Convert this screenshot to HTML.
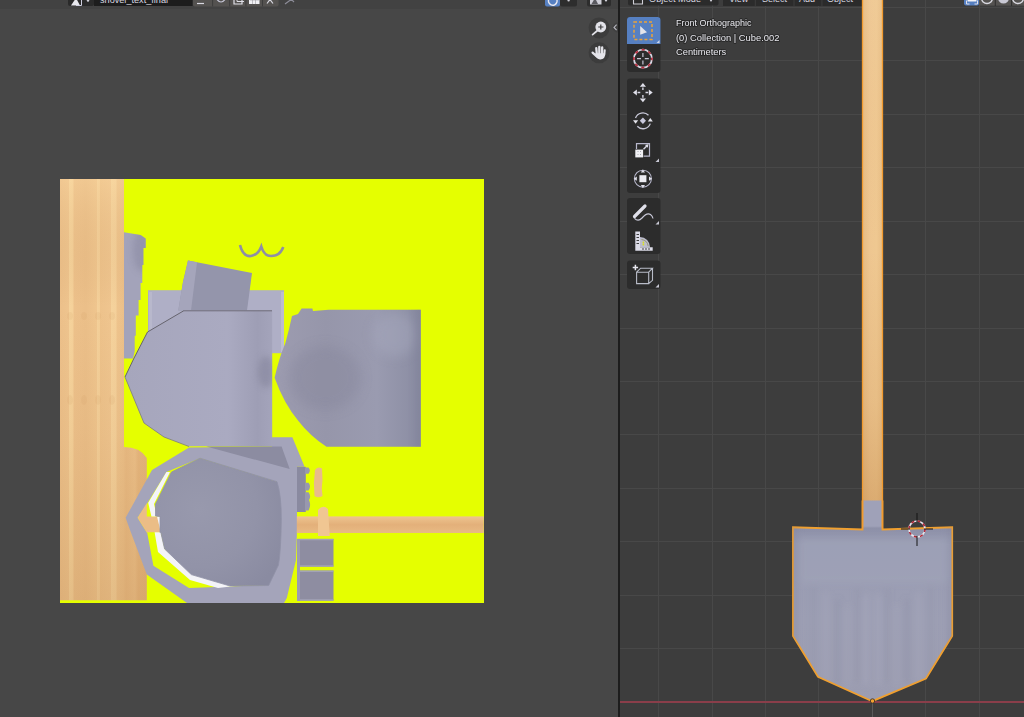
<!DOCTYPE html>
<html><head><meta charset="utf-8"><style>
html,body{margin:0;padding:0;width:1024px;height:717px;overflow:hidden;background:#474747}
svg{display:block}
text{font-family:"Liberation Sans",sans-serif}
</style></head><body>
<svg width="1024" height="717" viewBox="0 0 1024 717">
<defs>
<filter id="bl6" x="-50%" y="-50%" width="200%" height="200%"><feGaussianBlur stdDeviation="6"/></filter>
<filter id="bl3" x="-50%" y="-50%" width="200%" height="200%"><feGaussianBlur stdDeviation="3"/></filter>
<clipPath id="rpClip"><path d="M328.6 309.7H420.8V446.8H326.5Q310 436 298.4 421Q284 404 274.6 377.8Q279 358 285.4 343Q289 330 292 316L298 314L301.6 308.6H312.4L313 311Z"/></clipPath>
<clipPath id="fpClip"><path d="M184 310.6H272.2V446.3H189L164 437L144 423L125 377L133.6 359L147.5 332Z"/></clipPath>
<linearGradient id="woodV" x1="60" x2="147" y1="0" y2="0" gradientUnits="userSpaceOnUse">
<stop offset="0" stop-color="#ecc08a"/>
<stop offset="0.10" stop-color="#eec48e"/>
<stop offset="0.11" stop-color="#f6d39c"/>
<stop offset="0.15" stop-color="#f5d19a"/>
<stop offset="0.16" stop-color="#edc18b"/>
<stop offset="0.30" stop-color="#ebbf89"/>
<stop offset="0.42" stop-color="#efc58e"/>
<stop offset="0.43" stop-color="#f4d09a"/>
<stop offset="0.455" stop-color="#f3ce97"/>
<stop offset="0.465" stop-color="#edc28b"/>
<stop offset="0.58" stop-color="#efc58f"/>
<stop offset="0.59" stop-color="#f5d29c"/>
<stop offset="0.645" stop-color="#f4d09a"/>
<stop offset="0.655" stop-color="#eec48d"/>
<stop offset="0.73" stop-color="#ecc089"/>
<stop offset="0.76" stop-color="#e9bb84"/>
<stop offset="0.86" stop-color="#edc18a"/>
<stop offset="0.9" stop-color="#e7b880"/>
<stop offset="1" stop-color="#e6b57d"/>
</linearGradient>
<linearGradient id="woodShade" x1="0" x2="0" y1="179" y2="603" gradientUnits="userSpaceOnUse">
<stop offset="0" stop-color="#ffe0a8" stop-opacity="0.25"/>
<stop offset="0.3" stop-color="#a06a30" stop-opacity="0"/>
<stop offset="0.6" stop-color="#a06a30" stop-opacity="0.06"/>
<stop offset="1" stop-color="#a06a30" stop-opacity="0.2"/>
</linearGradient>
<linearGradient id="handleShade" x1="0" x2="0" y1="0" y2="501" gradientUnits="userSpaceOnUse">
<stop offset="0" stop-color="#ffffff" stop-opacity="0.05"/>
<stop offset="0.5" stop-color="#b07030" stop-opacity="0.0"/>
<stop offset="0.8" stop-color="#b07030" stop-opacity="0.12"/>
<stop offset="1" stop-color="#a86420" stop-opacity="0.28"/>
</linearGradient>
<linearGradient id="woodH" x1="0" x2="0" y1="0" y2="1">
<stop offset="0" stop-color="#eec48f"/>
<stop offset="0.5" stop-color="#e3b07a"/>
<stop offset="1" stop-color="#e8ba84"/>
</linearGradient>
<linearGradient id="handleV" x1="0" x2="1" y1="0" y2="0">
<stop offset="0" stop-color="#e6bb82"/>
<stop offset="0.35" stop-color="#eec690"/>
<stop offset="0.7" stop-color="#efc891"/>
<stop offset="1" stop-color="#e8be86"/>
</linearGradient>
<linearGradient id="blade" x1="0" x2="0" y1="500" y2="701" gradientUnits="userSpaceOnUse">
<stop offset="0" stop-color="#9fa1b8"/>
<stop offset="0.13" stop-color="#9fa1b8"/>
<stop offset="0.14" stop-color="#8d90a8"/>
<stop offset="0.22" stop-color="#999cb3"/>
<stop offset="0.6" stop-color="#9d9fb4"/>
<stop offset="1" stop-color="#9c9db1"/>
</linearGradient>
<linearGradient id="bladeEdge" x1="0" x2="1" y1="0" y2="0">
<stop offset="0" stop-color="#6f7188" stop-opacity="0.55"/>
<stop offset="0.2" stop-color="#6f7188" stop-opacity="0"/>
<stop offset="0.8" stop-color="#6f7188" stop-opacity="0"/>
<stop offset="1" stop-color="#6f7188" stop-opacity="0.5"/>
</linearGradient>
<linearGradient id="rightPiece" x1="0" x2="1" y1="0" y2="0">
<stop offset="0" stop-color="#9d9cb0"/>
<stop offset="0.35" stop-color="#9696aa"/>
<stop offset="0.7" stop-color="#9a9bb0"/>
<stop offset="1" stop-color="#8a8ca2"/>
</linearGradient>
<linearGradient id="frontPiece" x1="0" x2="1" y1="0" y2="0">
<stop offset="0" stop-color="#a6a6bc"/>
<stop offset="0.7" stop-color="#aaaac1"/>
<stop offset="0.9" stop-color="#9e9eb5"/>
<stop offset="1" stop-color="#a4a4bb"/>
</linearGradient>
<radialGradient id="innerOct" cx="0.35" cy="0.4" r="0.75">
<stop offset="0" stop-color="#9899ad"/>
<stop offset="0.6" stop-color="#9293a8"/>
<stop offset="1" stop-color="#8a8ba1"/>
</radialGradient>
</defs>

<!-- ============ LEFT EDITOR ============ -->
<rect x="0" y="0" width="618" height="717" fill="#474747"/>
<rect x="0" y="0" width="618" height="9" fill="#424242"/>

<!-- left header items (cut off at top) -->
<rect x="68" y="-6" width="26" height="12" rx="2" fill="#2a2a2a"/>
<path d="M71 5.5L76 -2L80 5.5Z" fill="#e8e8ee"/>
<path d="M81.5 -2V5.5H76" fill="none" stroke="#cfcfe0" stroke-width="1"/>
<circle cx="88" cy="0.5" r="1.2" fill="#d0d0d8"/>
<rect x="94" y="-6" width="98.6" height="12" fill="#1d1d1d"/>
<text x="100" y="2.6" font-size="9" fill="#d8d8e0" textLength="68" lengthAdjust="spacingAndGlyphs">shovel_text_final</text>
<rect x="193" y="-6" width="85.6" height="12.4" rx="2" fill="#545250"/>
<path d="M212.6 -6V6.4M229.7 -6V6.4M245.9 -6V6.4M262.5 -6V6.4" stroke="#3c3c3c" stroke-width="1"/>
<path d="M197 3.5H204" stroke="#d8d8e0" stroke-width="1.2"/>
<path d="M216 -2Q221 6 226 -2" fill="none" stroke="#c8c8d8" stroke-width="1.2"/>
<path d="M234 -2V4H242V-2" fill="none" stroke="#e0e0e8" stroke-width="1.2"/>
<path d="M237 -2V1.5H244" fill="none" stroke="#e0e0e8" stroke-width="1"/>
<rect x="249" y="-3" width="10.5" height="7" fill="#f0f0f4"/>
<path d="M250 0H259M252.5 -3V4M255.5 -3V4" stroke="#9a9aa0" stroke-width="0.6"/>
<path d="M267 3.5L270 -0.5L273 3.5" fill="none" stroke="#d8d8e0" stroke-width="1.2"/>
<path d="M285 4L294.5 -3M290 -2L294 2" fill="none" stroke="#8c8c98" stroke-width="1.2"/>

<!-- left header right side -->
<rect x="545" y="-6" width="15" height="12.6" rx="2" fill="#5680c2"/>
<path d="M556.3 -1.5A4.3 4.3 0 1 1 552 -3.3" fill="none" stroke="#e8e8f0" stroke-width="1.4"/>
<circle cx="555.5" cy="-2.5" r="1.8" fill="#e8e8f0"/>
<rect x="560" y="-6" width="17" height="12.6" rx="2" fill="#2d2d2d"/>
<circle cx="568.6" cy="0.3" r="1.2" fill="#d0d0d8"/>
<rect x="587" y="-6" width="24" height="12.6" rx="2" fill="#2d2d2d"/>
<rect x="590" y="-4" width="11.5" height="8.5" fill="#cfcfd8"/>
<path d="M591.5 4L595 -2L598 4Z" fill="#5a5a60"/>
<circle cx="606" cy="0.3" r="1.2" fill="#d0d0d8"/>

<!-- nav gizmo -->
<circle cx="599.1" cy="27.9" r="10.5" fill="#3c3c3c"/>
<circle cx="600.8" cy="27" r="5.4" fill="#e2e2e8"/>
<path d="M598.2 27H603.4M600.8 24.4V29.6" stroke="#3c3c3c" stroke-width="1.2"/>
<path d="M597.2 30.8L592.6 34.6" stroke="#e2e2e8" stroke-width="1.8" stroke-linecap="round"/>
<circle cx="599.1" cy="52.8" r="10.5" fill="#3c3c3c"/>
<g stroke="#e4e4ea" stroke-linecap="round" fill="none">
<path d="M596.3 48.2L596.8 54" stroke-width="2.3"/>
<path d="M599.3 46.9V54" stroke-width="2.3"/>
<path d="M602.2 47.4L602 54" stroke-width="2.3"/>
<path d="M604.7 50.4L604.2 55" stroke-width="2.1"/>
<path d="M592.6 52.6L596.5 56.2" stroke-width="2.3"/>
</g>
<path d="M595.2 53.2H605.2Q605.3 59.6 600 59.4Q596.5 59.3 595.2 55Z" fill="#e4e4ea"/>
<circle cx="617.5" cy="27.4" r="5" fill="#404040"/>
<path d="M616.6 24.6L614 27.4L616.6 30.2" fill="none" stroke="#b8b8c0" stroke-width="1.1"/>

<!-- ============ UV IMAGE ============ -->
<rect x="60" y="179" width="424" height="424" fill="#e5ff00"/>
<path d="M60 179H124V447Q140 447 146.8 458V600.2H60Z" fill="url(#woodV)"/>
<path d="M60 179H124V447Q140 447 146.8 458V600.2H60Z" fill="url(#woodShade)"/>
<g fill="#c89058" opacity="0.1">
<ellipse cx="70" cy="316" rx="3" ry="4"/><ellipse cx="84" cy="316" rx="3" ry="4"/><ellipse cx="98" cy="316" rx="3" ry="4"/><ellipse cx="112" cy="316" rx="3" ry="4"/>
<ellipse cx="70" cy="400" rx="3" ry="5"/><ellipse cx="84" cy="400" rx="3" ry="5"/><ellipse cx="98" cy="400" rx="3" ry="5"/><ellipse cx="112" cy="400" rx="3" ry="5"/>
</g>
<!-- tall strip -->
<path d="M124 232.3L140.6 235L145.7 238.4V248H143.4V265H142.3V283H140.6V300H138.6V315.6H135.8V335.7H134.7V351.3L133 358.5H124Z" fill="#a3a3ba"/>
<clipPath id="tsClip"><path d="M124 232.3L140.6 235L145.7 238.4V248H143.4V265H142.3V283H140.6V300H138.6V315.6H135.8V335.7H134.7V351.3L133 358.5H124Z"/></clipPath>
<g clip-path="url(#tsClip)"><ellipse cx="142" cy="250" rx="9" ry="22" fill="#84849c" opacity="0.45" filter="url(#bl3)"/></g>
<!-- behind rect -->
<rect x="148" y="290.2" width="136" height="63" fill="#afafc6"/>
<rect x="281" y="292" width="3" height="60" fill="#c4c4d6" opacity="0.6"/>
<rect x="149" y="292" width="3" height="40" fill="#b8b8cc"/>
<!-- tilted square -->
<path d="M188 260.5L252 273L247 310.5L178.3 310.5L183 282Z" fill="#9495ab"/>
<path d="M188 260.5L197 262.3L191 310.5L178.3 310.5L183 282Z" fill="#a5a5bb"/>
<!-- front piece -->
<path d="M184 310.6H272.2V446.3H189L164 437L144 423L125 377L133.6 359L147.5 332Z" fill="url(#frontPiece)"/>
<path d="M184 310.6L147.5 332L133.6 359L125 377" fill="none" stroke="#66646e" stroke-width="1"/>
<path d="M125 377L144 423L164 437L189 446.5" fill="none" stroke="#7a7888" stroke-width="0.8"/>
<path d="M184 310.8H272" stroke="#6e6c78" stroke-width="1"/>
<!-- right piece -->
<path d="M328.6 309.7H420.8V446.8H326.5Q310 436 298.4 421Q284 404 274.6 377.8Q279 358 285.4 343Q289 330 292 316L298 314L301.6 308.6H312.4L313 311Z" fill="url(#rightPiece)"/>
<g clip-path="url(#rpClip)">
<ellipse cx="325" cy="378" rx="36" ry="32" fill="#84849a" opacity="0.4" filter="url(#bl6)"/>
<ellipse cx="395" cy="335" rx="22" ry="22" fill="#a8aabf" opacity="0.45" filter="url(#bl6)"/>
<rect x="414" y="300" width="12" height="150" fill="#7e8098" opacity="0.45" filter="url(#bl3)"/>
</g>
<g clip-path="url(#fpClip)">
<ellipse cx="266" cy="372" rx="8" ry="16" fill="#808096" opacity="0.5" filter="url(#bl3)"/>
</g>
<!-- w -->
<path d="M240 245Q243 257 251 256Q258 255 261.3 246.5Q264 256 271 256Q280 256 283.3 247" fill="none" stroke="#8e8ea6" stroke-width="2.6"/>

<!-- ring outer -->
<path d="M189 447.5L272 446.5V437.3H292.4L304.6 466.8H297V530L296 560L286.8 598L284 603H187L146.8 574.6L130 530L125.6 517.8L152 470Z" fill="#a4a4ba"/>
<!-- darker triangle on top band -->
<path d="M206.3 446.5H281.6L289.7 469Z" fill="#8c8ca1"/>
<!-- ring hole -->
<path d="M137.6 517.8L147.6 502.7L166.4 472L200 458.2L276 481.7Q280 495 280 520Q280 550 277.5 565L267.7 585L189 588L153.4 565.7L147.3 533.3Z" fill="#e5ff00"/>
<!-- wood inside hole -->
<path d="M137.6 517.8L146.8 503V516.5H160V532.2H147.3L147.3 533.3Z" fill="#ebbd86"/>
<!-- white sliver -->
<path d="M166.4 472L148.2 502.7L151.4 516.5H160V532.2H154.6L158 552L190 580L218 588L235 586L200 576L164.6 549L161 533.3L154 504L170 472Z" fill="#f4f4f8"/>
<!-- inner octagon -->
<path d="M171.5 472L200 458.2L277 481.7Q281.5 495 281.3 520Q281 550 278.5 565L268.7 585.5L230 586L191.3 574.6L164.6 549L161 533.3L160 532.2V516.5L155.5 516V504Z" fill="url(#innerOct)" stroke="#9192a7" stroke-width="0.8"/>

<!-- bumps right of ring -->
<path d="M297 466.8H305.8V512H297Z" fill="#8a8aa0"/>
<path d="M305 467.4H308.5Q311.2 470.5 308.5 473.8H305ZM305 482.8H308.5Q311.5 486.5 308.5 490.5H305ZM305 492.3H308.5Q311.5 496 309 500Q311.5 505 308.5 510.5H305Z" fill="#9898ae"/>
<!-- wood nub -->
<path d="M315 470Q318 466 322 468.5L322.5 480Q321 488 322.5 496Q318 498.5 314.5 496Q313 483 315 470Z" fill="#e9bb8a"/>
<!-- handle -->
<rect x="296.8" y="516.4" width="187" height="16.6" fill="url(#woodH)"/>
<path d="M318 510Q323 504 328 509L329.8 536H318Z" fill="#f0c692"/>
<!-- small pieces -->
<rect x="297.5" y="539" width="36" height="27.5" fill="#8e8da1"/>
<path d="M297.5 539.5H333.5M297.5 566H333.5" stroke="#a2a2b6" stroke-width="1.5"/>
<rect x="297.5" y="570.6" width="36" height="30" fill="#8e8da1"/>
<path d="M297.5 571.3H333.5M297.5 600H333.5" stroke="#a2a2b6" stroke-width="1.5"/>
<rect x="297" y="539" width="3" height="62" fill="#9c9cb0"/>

<!-- ============ RIGHT VIEWPORT ============ -->
<rect x="620" y="0" width="404" height="717" fill="#3d3d3d"/>
<rect x="618" y="0" width="2" height="717" fill="#1d1d1d"/>
<g stroke="#484848" stroke-width="1">
<path d="M658.5 0V717M712.5 0V717M765.5 0V717M818.5 0V717M872.5 0V717M925.5 0V717M979.5 0V717"/>
<path d="M620 7.5H1024M620 60.5H1024M620 114.5H1024M620 167.5H1024M620 221.5H1024M620 274.5H1024M620 328.5H1024M620 381.5H1024M620 434.5H1024M620 488.5H1024M620 541.5H1024M620 595.5H1024M620 648.5H1024"/>
</g>
<rect x="620" y="701" width="404" height="2" fill="#8a3e4a"/>

<!-- right header -->
<rect x="628" y="-6" width="90.5" height="11.5" rx="2" fill="#2b2b2b"/>
<path d="M633.5 -2V4H642.5V-2" fill="none" stroke="#d0d0d8" stroke-width="1.1"/>
<circle cx="711" cy="0.5" r="1.1" fill="#c8c8d0"/>
<text x="649" y="1.6" font-size="9" fill="#d8d8e0" textLength="52" lengthAdjust="spacingAndGlyphs">Object Mode</text>
<rect x="723" y="-6" width="139" height="12" fill="#2b2b2b"/>
<path d="M755.3 -6V6M794 -6V6M821.9 -6V6" stroke="#3e3e3e" stroke-width="1"/>
<text x="729" y="1.6" font-size="9" fill="#d8d8e0">View</text>
<text x="762" y="1.6" font-size="9" fill="#d8d8e0">Select</text>
<text x="799" y="1.6" font-size="9" fill="#d8d8e0">Add</text>
<text x="827" y="1.6" font-size="9" fill="#d8d8e0">Object</text>
<rect x="964" y="-6" width="15" height="11.6" rx="2" fill="#5680c2"/>
<path d="M966.5 0.5V4H969.5M974.5 4H977.5V0.5" fill="none" stroke="#e0e0ea" stroke-width="1"/>
<rect x="967.5" y="-4" width="9" height="5.5" fill="#f4f4f8"/>
<rect x="979" y="-6" width="45" height="11.6" fill="#545250"/>
<path d="M995.3 -6V6M1011.6 -6V6" stroke="#2e2e2e" stroke-width="1"/>
<circle cx="987" cy="-2" r="5.5" fill="none" stroke="#d8d8e0" stroke-width="1.4"/>
<circle cx="1003.5" cy="-2" r="5.5" fill="#c8c8d4"/>
<circle cx="1018" cy="-2" r="5.5" fill="none" stroke="#d8d8e0" stroke-width="1.4"/>

<!-- ============ SHOVEL ============ -->
<rect x="862.5" y="-2" width="20" height="503" fill="url(#handleV)"/>
<rect x="862.5" y="-2" width="20" height="503" fill="url(#handleShade)"/>
<path d="M792.8 527.3L862.5 529.5V500.5H882.5V529.5L952.2 527.3V636L926 678.5L872.3 701.2L818 676.8L793 636Z" fill="url(#blade)"/>
<path d="M882.5 500.5V529.5L952.2 527.3V636L926 678.5L872.3 701.2L818 676.8L793 636V527.3L862.5 529.5V500.5" fill="none" stroke="#f0a030" stroke-width="1.8"/>
<path d="M862.5 -2V529M882.5 -2V529" stroke="#f29a2e" stroke-width="1.3"/>
<clipPath id="bladeClip"><path d="M792.8 527.3L862.5 529.5V500.5H882.5V529.5L952.2 527.3V636L926 678.5L872.3 701.2L818 676.8L793 636Z"/></clipPath>
<g clip-path="url(#bladeClip)" filter="url(#bl3)">
<rect x="812.0" y="585" width="3" height="95" fill="#7f8298" opacity="0.22"/>
<rect x="929.6" y="585" width="3" height="95" fill="#7f8298" opacity="0.22"/>
<rect x="824.0" y="592" width="4" height="90" fill="#b2b3c6" opacity="0.28"/>
<rect x="916.6" y="592" width="4" height="90" fill="#b2b3c6" opacity="0.28"/>
<rect x="836.0" y="599" width="3" height="85" fill="#7f8298" opacity="0.34"/>
<rect x="905.6" y="599" width="3" height="85" fill="#7f8298" opacity="0.34"/>
<rect x="846.0" y="606" width="4" height="80" fill="#b2b3c6" opacity="0.22"/>
<rect x="894.6" y="606" width="4" height="80" fill="#b2b3c6" opacity="0.22"/>
<rect x="856.0" y="588" width="3" height="95" fill="#7f8298" opacity="0.28"/>
<rect x="885.6" y="588" width="3" height="95" fill="#7f8298" opacity="0.28"/>
<rect x="864.0" y="595" width="4" height="90" fill="#b2b3c6" opacity="0.34"/>
<rect x="876.6" y="595" width="4" height="90" fill="#b2b3c6" opacity="0.34"/>
<rect x="800" y="538" width="150" height="45" fill="#a6a8be" opacity="0.3"/>
<rect x="784" y="520" width="14" height="130" fill="#7e8098" opacity="0.25"/>
<rect x="947" y="520" width="14" height="130" fill="#7e8098" opacity="0.25"/>
</g>
<!-- 3D cursor -->
<circle cx="917" cy="529" r="8" fill="none" stroke="#e8e8f0" stroke-width="1.6"/>
<circle cx="917" cy="529" r="8" fill="none" stroke="#b02838" stroke-width="1.6" stroke-dasharray="3.1 3.2"/>
<path d="M917 513V522M917 536V546M901 529H910M924 529H933" stroke="#151515" stroke-width="1"/>
<circle cx="872.5" cy="701" r="2.2" fill="#f0a030" stroke="#2a2a2a" stroke-width="0.8"/>
<path d="M872.5 703.5V717" stroke="#5a5a5a" stroke-width="1"/>

<!-- overlay text -->
<g font-size="9.5" fill="none" stroke="#1a1a1a" stroke-width="2" stroke-opacity="0.55" stroke-linejoin="round">
<text x="676" y="26" textLength="75.5" lengthAdjust="spacingAndGlyphs">Front Orthographic</text>
<text x="676" y="40.5" textLength="103.5" lengthAdjust="spacingAndGlyphs">(0) Collection | Cube.002</text>
<text x="676" y="55" textLength="50.2" lengthAdjust="spacingAndGlyphs">Centimeters</text>
</g>
<g font-size="9.5" fill="#e8e8ee">
<text x="676" y="26" textLength="75.5" lengthAdjust="spacingAndGlyphs">Front Orthographic</text>
<text x="676" y="40.5" textLength="103.5" lengthAdjust="spacingAndGlyphs">(0) Collection | Cube.002</text>
<text x="676" y="55" textLength="50.2" lengthAdjust="spacingAndGlyphs">Centimeters</text>
</g>

<!-- ============ TOOLBAR ============ -->
<g fill="#2c2c2c">
<rect x="627" y="17" width="33.5" height="55" rx="3"/>
<rect x="627" y="78.4" width="33.5" height="114.5" rx="3"/>
<rect x="627" y="198" width="33.5" height="56" rx="3"/>
<rect x="627" y="260.6" width="33.5" height="28.4" rx="3"/>
</g>
<!-- select (active) -->
<path d="M627 44V20A3 3 0 0 1 630 17H657.5A3 3 0 0 1 660.5 20V44Z" fill="#5680c2"/>
<rect x="634" y="22" width="18" height="17.4" fill="none" stroke="#eaa23a" stroke-width="1.5" stroke-dasharray="3 2"/>
<path d="M640.2 26L647 32.3L640.2 34.8Z" fill="#e4e4ea"/>
<path d="M659.5 40V43H656.5Z" fill="#cfd6e8"/>
<!-- cursor tool -->
<circle cx="642.9" cy="58.7" r="9" fill="none" stroke="#d8d8e4" stroke-width="1.8"/>
<circle cx="642.9" cy="58.7" r="9" fill="none" stroke="#b83242" stroke-width="1.8" stroke-dasharray="3.2 3.87" stroke-dashoffset="1.6"/>
<path d="M642.9 53V57M642.9 60.5V64.5M637 58.7H641M644.8 58.7H648.8" stroke="#c4c4d4" stroke-width="1.2"/>
<!-- move -->
<g fill="#e0e0ea" stroke="none">
<path d="M642.9 82.9L646 86.8H639.8Z"/>
<path d="M642.9 102.3L646 98.4H639.8Z"/>
<path d="M633 92.5L636.9 89.4V95.6Z"/>
<path d="M652.7 92.5L648.8 89.4V95.6Z"/>
</g>
<path d="M642.9 87.5V90M642.9 95V97.7M637.5 92.5H640.3M645.5 92.5H648.2" stroke="#d8d8e4" stroke-width="1.4"/>
<!-- rotate -->
<path d="M635.5 118A7.8 7.8 0 0 1 648.5 115.3M650.3 123.6A7.8 7.8 0 0 1 637.3 126.3" fill="none" stroke="#c8c8d8" stroke-width="1.3"/>
<path d="M642.9 117.6L646 120.8L642.9 124L639.8 120.8Z" fill="#c8c8dc"/>
<path d="M633 120.3H638.2L635.6 123.8Z" fill="#e4e4ec"/>
<path d="M647.8 121.5H652.8L650.3 118Z" fill="#e4e4ec"/>
<!-- scale -->
<path d="M636.5 149V143.7H649.5V156.2H643.6" fill="none" stroke="#b8b8cc" stroke-width="1.2"/>
<rect x="635.3" y="149.6" width="7.8" height="7.8" fill="#f0f0f4"/>
<path d="M637.5 151.5h1M640 151.5h1M637.5 154.5h1M640 154.5h1" stroke="#a8a8b0" stroke-width="1"/>
<path d="M643.5 149.2L647.5 145.2" stroke="#d8d8e4" stroke-width="1.4"/>
<path d="M648.5 144.2L645 145L647.7 147.7Z" fill="#e0e0ea"/>
<path d="M659 158.5V162H655.5Z" fill="#c8c8d4"/>
<!-- transform -->
<circle cx="642.9" cy="178.7" r="8.5" fill="none" stroke="#b8b8cc" stroke-width="1.1"/>
<rect x="639.4" y="175.2" width="7" height="7" fill="#ececf2"/>
<g fill="#e0e0ea">
<path d="M642.9 169.5L645 172.5H640.8Z"/>
<path d="M642.9 188L645 185H640.8Z"/>
<path d="M633.8 178.7L636.8 176.6V180.8Z"/>
<path d="M652 178.7L649 176.6V180.8Z"/>
</g>
<!-- annotate -->
<path d="M645 206L634.5 216.5" stroke="#e0e0ea" stroke-width="3.2" stroke-linecap="round"/>
<path d="M634.5 218.3Q638 222 642 218Q647 212 650.5 214.5Q652.5 216 653 218.5" fill="none" stroke="#c8c8d8" stroke-width="1.2"/>
<path d="M659 221V224.5H655.5Z" fill="#c8c8d4"/>
<!-- measure -->
<path d="M635.3 231.4H640V247.2H652.7V250.8H635.3Z" fill="#dcdce8"/>
<path d="M640 237A10 10 0 0 1 650 247.2H640Z" fill="#bcbccc"/>
<path d="M636.5 234.5h2.5M636.5 237.5h2.5M636.5 240.5h2.5M636.5 243.5h2.5M643 248v2M646 248v2M649 248v2" stroke="#2c2c2c" stroke-width="0.9"/>
<path d="M641.5 239.5A7.8 7.8 0 0 1 648.2 246.2" fill="none" stroke="#8a8a60" stroke-width="0.8"/>
<circle cx="643.4" cy="242.4" r="0.9" fill="#d8e020"/>
<circle cx="643.4" cy="244.5" r="0.9" fill="#d8e020"/>
<!-- add cube -->
<path d="M635.4 264.8V270.2M632.7 267.5H638.1" stroke="#e8e8f0" stroke-width="1.5"/>
<path d="M636.6 272.2H648.7V283.6H636.6Z M636.6 272.2L640.6 268.2H652.5L648.7 272.2M652.5 268.2V280.3L648.7 283.6" fill="none" stroke="#b8bcc8" stroke-width="1.1"/>
<path d="M659 284V287.5H655.5Z" fill="#c8c8d4"/>
</svg>
</body></html>
